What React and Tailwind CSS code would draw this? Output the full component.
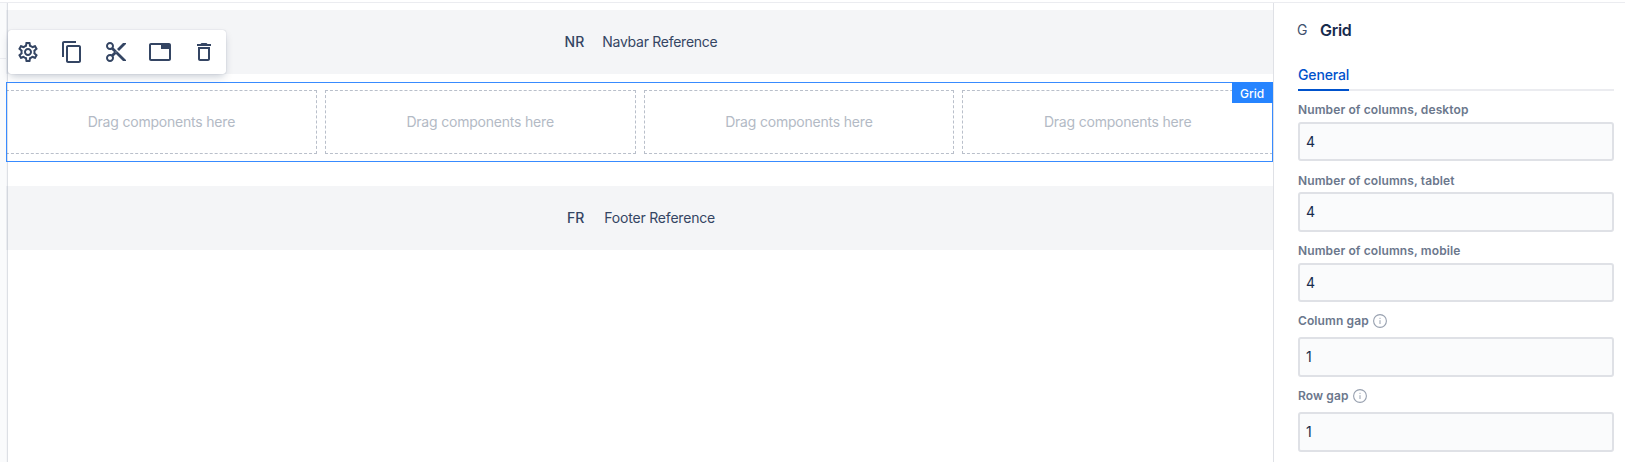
import React from "react";
import { MdOutlineSettings, MdContentCopy, MdContentCut, MdOutlineTab, MdDeleteOutline } from "react-icons/md";

const tools = [
  { name: "Settings", Icon: MdOutlineSettings },
  { name: "Copy", Icon: MdContentCopy },
  { name: "Cut", Icon: MdContentCut },
  { name: "Section", Icon: MdOutlineTab },
  { name: "Delete", Icon: MdDeleteOutline },
];

const cells = [0, 1, 2, 3];

function Toolbar() {
  return (
    <div className="absolute left-[2px] top-[20px] z-20 flex h-[44px] w-[218px] items-center gap-5 rounded-[3px] bg-white pl-[8px] shadow-[0_4px_8px_-2px_rgba(9,30,66,0.25),0_0_1px_rgba(9,30,66,0.31)]">
      {tools.map(({ name, Icon }) => (
        <button key={name} aria-label={name} className="text-[#344563]">
          <Icon size={24} />
        </button>
      ))}
    </div>
  );
}

function Reference({ code, children }) {
  return (
    <div className="flex h-16 items-center justify-center bg-[#f4f5f7] pl-[3px] text-[14px] leading-5 text-[#344563]">
      <span className="font-medium">{code}</span>
      {children}
    </div>
  );
}

function Info() {
  return (
    <svg width="14" height="14" viewBox="0 0 14 14" fill="none" stroke="#97a0af" className="shrink-0">
      <circle cx="7" cy="7" r="6.4" strokeWidth="1.1" />
      <path d="M7 6.2v3.8M7 3.8v1.1" strokeWidth="1" />
    </svg>
  );
}

function Field({ label, value, info }) {
  return (
    <label className="block">
      <span className={info ? "flex h-[35px] items-center gap-[4px] pt-[3px]" : "flex h-[30.7px] items-center pt-[8px]"}>
        <span className="whitespace-nowrap text-[12px] font-semibold leading-4 tracking-[0.11px] text-[#6b778c]">{label}</span>
        {info && <Info />}
      </span>
      <span className="flex h-[39.8px] items-center rounded-[3px] border-2 border-[#dfe1e6] bg-[#fafbfc] pl-[6px] text-[14px] leading-5 text-[#172b4d]">
        {value}
      </span>
    </label>
  );
}

export default function App() {
  return (
    <div className="flex h-[462px] w-full flex-col overflow-hidden bg-white pt-[2px] font-['Inter',sans-serif]">
      <div className="h-px shrink-0 bg-[#ebecf0]" />
      <div className="flex min-h-0 flex-1">
        <aside className="w-[6px] shrink-0 bg-[#fafbfc] pt-[55px]">
          <div className="h-px bg-[#ebecf0]" />
        </aside>
        <main className="relative min-w-0 flex-1 pt-[7px]">
          <div className="absolute inset-y-0 left-0 z-10 w-[2px] border-r border-[#091e42]/10 bg-[#091e42]/4" />
          <div className="relative">
            <Reference code="NR">
              <span className="ml-[18px] tracking-[-0.27px]">Navbar Reference</span>
            </Reference>
            <Toolbar />
          </div>
          <div className="relative mt-2 h-20">
            <div className="grid h-full grid-cols-4 gap-2 py-2">
              {cells.map((i) => (
                <div key={i} className="flex items-center justify-center border border-dashed border-[#b9bfca] text-[14px] leading-5 tracking-[-0.2px] text-[#b3bac5]">
                  Drag components here
                </div>
              ))}
            </div>
            <div className="pointer-events-none absolute inset-0 z-10 border border-[#388bff]" />
            <div className="absolute right-0 top-0 z-10 flex h-[21px] w-[41px] items-center bg-[#2684ff] pl-[8px] pt-[2px] text-[12px] font-medium leading-4 text-white">
              Grid
            </div>
          </div>
          <div className="mt-6">
            <Reference code="FR">
              <span className="ml-[20px] tracking-[-0.2px]">Footer Reference</span>
            </Reference>
          </div>
        </main>
        <aside className="w-[352px] shrink-0 border-l border-[#dfe1e6] pl-6 pr-[11px]">
          <header className="flex h-[54px] items-center">
            <span className="-ml-px w-[23px] text-[14px] leading-5 text-[#42526e]">G</span>
            <h1 className="text-[16px] font-semibold leading-5 tracking-[-0.3px] text-[#172b4d]">Grid</h1>
          </header>
          <div className="flex h-[34px] border-b-2 border-[#ebecf0]">
            <button className="h-[34px] shrink-0 border-b-2 border-[#0052cc] pt-[3px] text-[14px] font-medium leading-5 tracking-[-0.15px] text-[#0052cc]">General</button>
          </div>
          <div>
            <Field label="Number of columns, desktop" value="4" />
            <Field label="Number of columns, tablet" value="4" />
            <Field label="Number of columns, mobile" value="4" />
            <Field label="Column gap" value="1" info />
            <Field label="Row gap" value="1" info />
          </div>
        </aside>
      </div>
    </div>
  );
}
